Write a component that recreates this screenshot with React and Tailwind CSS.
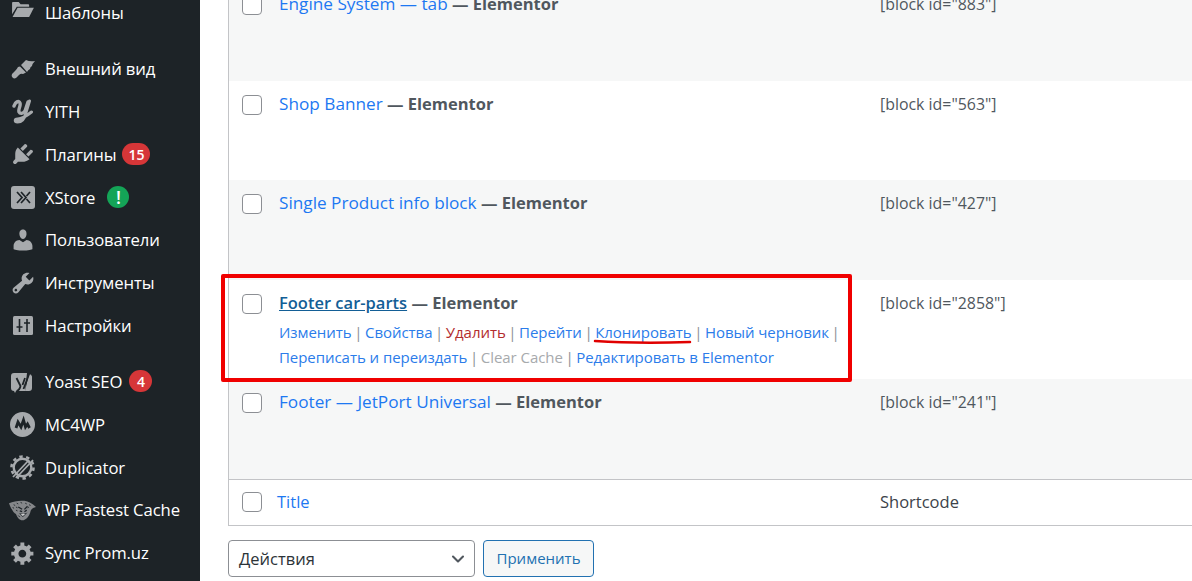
import { ChevronDown } from "lucide-react";

const font = "font-['Open_Sans','Noto_Sans',sans-serif]";

function Menu({ icon, label, badge, badgeClass, gap }) {
  return (
    <div className={`flex h-[42.85px] items-center pl-[9px] text-white ${gap ? "mb-[13px]" : ""}`}>
      <span className="flex w-[36px] shrink-0 items-center justify-center pr-[9px] text-[#a7aaad]">{icon}</span>
      <span className="text-[16.7px] tracking-[-0.1px] whitespace-nowrap">{label}</span>
      {badge && (
        <span className={`flex h-[22px] items-center justify-center rounded-full text-[14px] font-semibold ${badgeClass}`}>
          {badge}
        </span>
      )}
    </div>
  );
}

function Dash({ d, size = 26 }) {
  return (
    <svg width={size} height={size} viewBox="0 0 20 20" fill="#a7aaad">
      <path d={d} />
    </svg>
  );
}

function FolderIcon() {
  return (
    <svg className="-mt-[8px]" width="23" height="18" viewBox="0 0 24 19" fill="#a7aaad">
      <path d="M1 3a1 1 0 011-1h6l2 2.500h8a1 1 0 011 1V7H6L1 15z" />
      <path d="M6.800 8.300H24L19 18H1.500z" />
    </svg>
  );
}

function BrushIcon() {
  return (
    <svg width="24" height="20" viewBox="0 0 24 20" fill="#a7aaad">
      <path d="M10 6l5-5q4 2 9 1-3 3-3 5-2 1-2 3-2 1-3 3z" />
      <path d="M9 7.500l6 6-3 1.500q-2-1-4 1l-3 3q-2 1-3.500-.5T1 15l3-3q2-2 3-4z" />
    </svg>
  );
}

function XStoreIcon() {
  return (
    <svg width="24" height="23" viewBox="0 0 24 23">
      <rect width="24" height="23" rx="3" fill="#a7aaad" />
      <path d="M6 6l5 5.500-5 5.500M10 6l5 5.500-5 5.500M19 6l-3.500 4M19 17l-3.500-4" fill="none" stroke="#1d2327" strokeWidth="1.700" />
    </svg>
  );
}

function YithIcon() {
  return (
    <svg width="21" height="26" viewBox="0 0 21 26" fill="none" stroke="#a7aaad" strokeLinecap="round">
      <path d="M2 8C3 4 7 2 8 5c1 3-2 6-1 9 1 2 4 2 6-1l3-9" strokeWidth="3.400" />
      <path d="M17.500 3l-4 13c-1 5-4 8-8 8-3 0-3-3 0-3 3 0 9-3 14-7" strokeWidth="3" />
    </svg>
  );
}

function SettingsIcon() {
  return (
    <svg width="20" height="19" viewBox="0 0 20 19">
      <rect width="20" height="19" rx="1.500" fill="#a7aaad" />
      <path d="M6.500 3v13M14 3v13M3.500 11h6M11 7h6" stroke="#1d2327" strokeWidth="1.600" />
    </svg>
  );
}

function YoastIcon() {
  return (
    <svg width="23" height="25" viewBox="0 0 23 25">
      <path d="M3 4h13l-2 18H5l-1 2-1-2a3 3 0 01-3-3V7a3 3 0 013-3zM18 5a3 3 0 013 2.500V19a3 3 0 01-3 3h-4z" fill="#a7aaad" />
      <path d="M5.500 9l4 8c-.5 3-2 4.500-4 5M20 0l-7.500 20M14 9l-2.500 7" fill="none" stroke="#1d2327" strokeWidth="1.800" />
    </svg>
  );
}

function Mc4wpIcon() {
  return (
    <svg width="25" height="25" viewBox="0 0 25 25">
      <circle cx="12.500" cy="12.500" r="12.500" fill="#a7aaad" />
      <path d="M6 16l2-6 3 5 2.500-7 2 7 2-3 2 4" fill="none" stroke="#1d2327" strokeWidth="2.800" />
    </svg>
  );
}

function DuplicatorIcon() {
  return (
    <svg width="25" height="25" viewBox="0 0 25 25">
      <circle cx="12.500" cy="12.500" r="8.800" fill="none" stroke="#a7aaad" strokeWidth="2.400" />
      <circle cx="12.500" cy="12.500" r="11" fill="none" stroke="#a7aaad" strokeWidth="2.600" strokeDasharray="3.400 3.500" />
      <path d="M3 22L19 5M7 22L23 5" stroke="#a7aaad" strokeWidth="1.800" />
    </svg>
  );
}

function CheetahIcon() {
  return (
    <svg width="35" height="27" viewBox="0 0 35 27">
      <path d="M0 4c6-2 13-4 20-3 5 1 10 3 15 8-3 1-6 2-7 5-1 5-4 10-9 12-5 1-8-3-10-8-3-1-7-8-9-14z" fill="#85878a" />
      <path d="M6 6l2 1M10 4l2 1M15 3l2 1M21 4l2 1M26 6l2 1M9 9l2 1M5 9l1 2M9 13l2 1M24 10l2-1M12 20l2 2" stroke="#1d2327" strokeWidth="1.100" fill="none" />
      <path d="M12 9l5 3M24 8l-4 4M14 14l3 1M23 13l-3 2" stroke="#1d2327" strokeWidth="1.600" fill="none" />
      <path d="M13 17l5 5 6-6-5 2z" fill="#1d2327" />
      <path d="M15 18.500l3 2 3-2.500z" fill="#e3e3e4" />
    </svg>
  );
}

const plug = "M13.11 4.36L9.87 7.6 8 5.73l3.24-3.24c.35-.34 1.05-.2 1.56.32.52.51.66 1.21.31 1.55zm-8 1.77l.91-1.12 9.01 9.01-1.19.84c-.71.71-2.63 1.16-3.82 1.16H6.14L4.9 17.26c-.59.59-1.54.59-2.12 0-.59-.58-.59-1.53 0-2.12l1.24-1.24v-3.88c0-1.13.4-3.19 1.09-3.89zm7.26 3.97l3.24-3.24c.34-.35 1.04-.21 1.55.31.52.51.66 1.21.31 1.55l-3.24 3.25z";
const user = "M10 9.25c-2.27 0-2.73-3.44-2.73-3.44C7 4.02 7.82 2 9.97 2c2.16 0 2.98 2.02 2.71 3.81 0 0-.41 3.44-2.68 3.44zm0 2.57L12.72 10c2.39 0 4.52 2.33 4.52 4.53v2.49s-3.65 1.13-7.24 1.13c-3.65 0-7.24-1.13-7.24-1.13v-2.49c0-2.25 1.94-4.48 4.47-4.48z";
const wrench = "M16.68 9.77c-1.34 1.34-3.3 1.67-4.95.99l-5.41 6.52c-.99.99-2.59.99-3.58 0s-.99-2.59 0-3.57l6.52-5.42c-.68-1.65-.35-3.61.99-4.95 1.28-1.28 3.12-1.62 4.72-1.06l-2.89 2.89 2.82 2.82 2.86-2.87c.53 1.58.18 3.39-1.08 4.67zM3.81 16.21c.4.39 1.04.39 1.43 0 .4-.4.4-1.04 0-1.43-.39-.4-1.03-.4-1.43 0-.39.39-.39 1.03 0 1.43z";
const cog = "M18 12h-2.18c-.17.7-.44 1.35-.81 1.93l1.54 1.54-2.1 2.1-1.54-1.54c-.58.36-1.23.63-1.91.79V19H8v-2.18c-.68-.16-1.33-.43-1.91-.79l-1.54 1.54-2.12-2.12 1.54-1.54c-.36-.58-.63-1.23-.79-1.91H1V9.03h2.17c.16-.7.44-1.35.8-1.94L2.43 5.55l2.1-2.1 1.54 1.54c.58-.37 1.24-.64 1.93-.81V2h3v2.18c.68.16 1.33.43 1.91.79l1.54-1.54 2.12 2.12-1.54 1.54c.36.59.64 1.24.8 1.94H18V12zm-8.5 1.5c1.66 0 3-1.34 3-3s-1.34-3-3-3-3 1.34-3 3 1.34 3 3 3z";

const rows = [
  { title: "Engine System — tab", id: "883", top: true },
  { title: "Shop Banner", id: "563", white: true },
  { title: "Single Product info block", id: "427" },
  { title: "Footer car-parts", id: "2858", white: true, open: true },
  { title: "Footer — JetPort Universal", id: "241" },
];

function Sep() {
  return <span className="mx-[2.6px] text-[#8c8f94]">|</span>;
}

function RowActions() {
  return (
    <div className="mt-[5.5px] text-[15px] leading-[25px] tracking-[-0.05px] whitespace-nowrap text-[#2b7cea]">
      <div>
        <span>Изменить</span><Sep />
        <span>Свойства</span><Sep />
        <span className="text-[#b32d2e]">Удалить</span><Sep />
        <span>Перейти</span><Sep />
        <span>Клонировать</span><Sep />
        <span>Новый черновик</span><Sep />
      </div>
      <div>
        <span>Переписать и переиздать</span><Sep />
        <span className="text-[#a7aaad]">Clear Cache</span><Sep />
        <span>Редактировать в Elementor</span>
      </div>
    </div>
  );
}

function Checkbox() {
  return <span className="block h-[20px] w-[20px] rounded-[4px] border border-[#8c8f94] bg-white" />;
}

function Row({ row }) {
  return (
    <div className={`flex h-[99.5px] ${row.white ? "bg-white" : "bg-[#f6f7f7]"}`}>
      <div className="w-[50px] shrink-0 pt-[14px] pl-[13px]">
        <Checkbox />
      </div>
      <div className="w-[601px] shrink-0 pt-[11px] text-[17.2px] leading-[24px]">
        <span className={row.open ? "text-[16.5px] font-semibold text-[#135e96] underline" : "text-[#1d78f2]"}>{row.title}</span>
        <span className="text-[16.5px] font-bold text-[#50575e]"> — Elementor</span>
        {row.open && <RowActions />}
      </div>
      <div className="pt-[11px] text-[15.9px] leading-[24px] text-[#50575e]">[block id="{row.id}"]</div>
    </div>
  );
}

export default function App() {
  return (
    <div className={`relative flex h-[581px] w-[1192px] overflow-hidden bg-white ${font}`}>
      <aside className="-mt-[8.7px] w-[200px] shrink-0 bg-[#1d2327]">
        <Menu icon={<FolderIcon />} label="Шаблоны" gap />
        <Menu icon={<BrushIcon />} label="Внешний вид" />
        <Menu icon={<YithIcon />} label="YITH" />
        <Menu icon={<Dash d={plug} />} label="Плагины" badge="15" badgeClass="ml-[6px] w-[28px] bg-[#d63638]" />
        <Menu icon={<XStoreIcon />} label="XStore" badge="!" badgeClass="ml-[12px] w-[22px] bg-[#14a457] text-[18px] font-bold" />
        <Menu icon={<Dash d={user} />} label="Пользователи" />
        <Menu icon={<Dash d={wrench} />} label="Инструменты" />
        <Menu icon={<SettingsIcon />} label="Настройки" gap />
        <Menu icon={<YoastIcon />} label="Yoast SEO" badge="4" badgeClass="ml-[7px] w-[23px] bg-[#d63638]" />
        <Menu icon={<Mc4wpIcon />} label="MC4WP" />
        <Menu icon={<DuplicatorIcon />} label="Duplicator" />
        <Menu icon={<CheetahIcon />} label="WP Fastest Cache" />
        <Menu icon={<Dash d={cog} />} label="Sync Prom.uz" />
      </aside>

      <main className="-mt-[20px] ml-[28px] flex-1">
        <div className="-mr-[1px] border border-[#c3c4c7]">
          {rows.map((row) => (
            <Row key={row.id} row={row} />
          ))}
          <div className="flex h-[46px] items-center border-t border-[#c3c4c7] bg-white">
            <div className="w-[48px] shrink-0 pl-[13px]">
              <Checkbox />
            </div>
            <div className="w-[603px] shrink-0 text-[16.5px] text-[#1d78f2]">Title</div>
            <div className="text-[16.5px] text-[#3c434a]">Shortcode</div>
          </div>
        </div>
        <div className="mt-[14px] flex gap-[8px]">
          <div className="flex h-[37px] w-[247px] items-center justify-between rounded-[4px] border border-[#8c8f94] bg-white pt-[2px] pr-[6px] pl-[10px] text-[16.5px] text-[#2c3338]">
            <span>Действия</span>
            <ChevronDown className="h-[20px] w-[20px] text-[#50575e]" strokeWidth={2.5} />
          </div>
          <div className="flex h-[37px] w-[111px] items-center justify-center rounded-[4px] border border-[#2271b1] bg-[#f6f7f7] pt-[1px] text-[15px] text-[#2271b1]">
            Применить
          </div>
        </div>
      </main>

      {/* red annotation drawn over the screenshot */}
      <div className="absolute top-[274px] left-[221px] h-[108px] w-[631px] rounded-[2px] border-[4px] border-[#f00000]" />
      <svg className="absolute top-[336px] left-[592px]" width="100" height="10" viewBox="0 0 100 10">
        <path d="M3 5c30 2 65 2 95 1" fill="none" stroke="#e00000" strokeWidth="2.5" strokeLinecap="round" />
      </svg>
    </div>
  );
}
